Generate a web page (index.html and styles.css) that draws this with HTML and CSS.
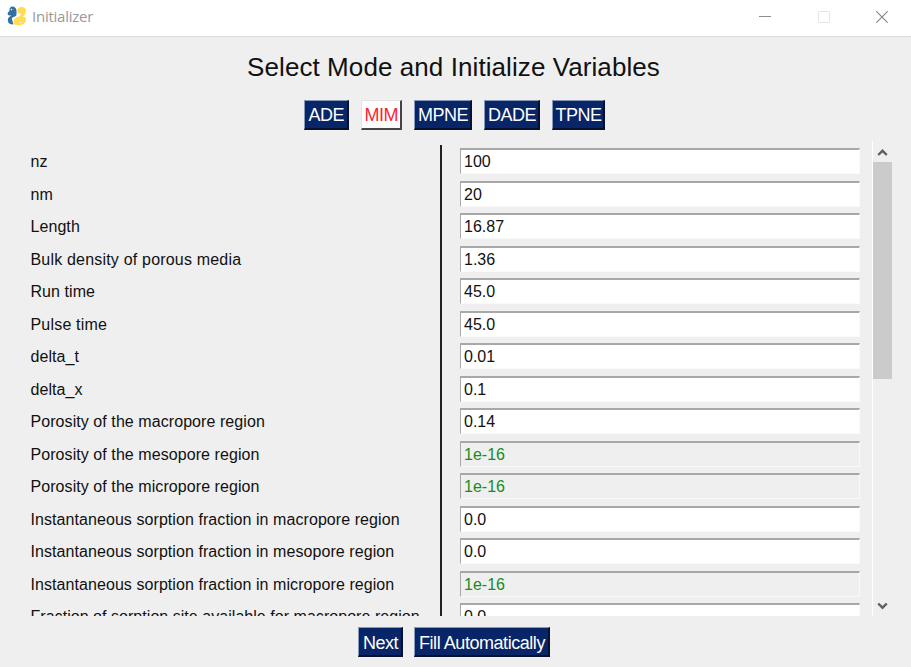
FILE: index.html
```html
<!DOCTYPE html>
<html lang="en">
<head>
<meta charset="utf-8">
<title>Initializer</title>
<link rel="stylesheet" href="styles.css">
</head>
<body>
<header class="titlebar">
  <svg class="logo" width="20" height="20" viewBox="0 0 20 20">
    <path d="M2.500 4.200Q2.500.6 5.500.6T9.500 4.200v4.300Q9.500 10 8 10.500l-2.500 1Q4.500 12 5 13.500l1.500 5Q1 18.500.8 14.500.6 12 2.500 10.700L4.500 9.500H2Q.6 9 .6 7.500T2.500 5z" fill="#3470a4"/>
    <path d="M10.500 4.500Q10.500 1 14.500.9q4.500 0 4.500 4.100 0 3-2 4.500l-1.500 1.200h2q1.500.8 1.500 2.800 0 2.800-2.500 4.500-2.500 1.500-6 1.300-4-.3-4-3.500Q6.500 12.500 9.500 11.500l3-1.300q1.800-1 1.500-2.700H10.500z" fill="#ffdc51"/>
    <circle cx="4.500" cy="3.500" r=".8" fill="#fff"/><circle cx="13.500" cy="16.500" r=".8" fill="#fff"/>
  </svg>
  <span class="app-name">Initializer</span>
  <div class="controls">
    <svg width="12" height="12" viewBox="0 0 12 12"><path d="M0 5.500h12" stroke="#8e8e8e"/></svg>
    <svg width="12" height="12" viewBox="0 0 12 12"><path d="M.5.5h11v11H.5z" fill="none" stroke="#e6e6e6"/></svg>
    <svg width="12" height="12" viewBox="0 0 12 12"><path d="M.3.3l11.400 11.400M11.700.3L.3 11.700" stroke="#858585" stroke-width="1.100"/></svg>
  </div>
</header>
<h1>Select Mode and Initialize Variables</h1>
<nav class="modes">
  <button class="w44">ADE</button>
  <button class="w42 active">MIM</button>
  <button class="w58">MPNE</button>
  <button class="w56">DADE</button>
  <button class="w53">TPNE</button>
</nav>
<main class="pane">
  <div class="labels">
    <div>nz</div><div>nm</div><div>Length</div><div class="loose">Bulk density of porous media</div><div>Run time</div><div class="loose">Pulse time</div><div>delta_t</div><div>delta_x</div><div>Porosity of the macropore region</div><div>Porosity of the mesopore region</div><div>Porosity of the micropore region</div><div>Instantaneous sorption fraction in macropore region</div><div>Instantaneous sorption fraction in mesopore region</div><div>Instantaneous sorption fraction in micropore region</div><div class="last">Fraction of sorption site available for macropore region</div>
  </div>
  <div class="divider"></div>
  <div class="fields">
    <div><span>100</span></div><div><span>20</span></div><div><span>16.87</span></div><div><span>1.36</span></div><div><span>45.0</span></div><div><span>45.0</span></div><div><span>0.01</span></div><div><span>0.1</span></div><div><span>0.14</span></div><div><span class="off">1e-16</span></div><div><span class="off">1e-16</span></div><div><span>0.0</span></div><div><span>0.0</span></div><div><span class="off">1e-16</span></div><div><span>0.0</span></div>
  </div>
  <div class="scrollbar">
    <svg width="20" height="21" viewBox="0 0 20 21"><path d="M5.200 14l4.300-4.200 4.300 4.200" fill="none" stroke="#606060" stroke-width="2.400"/></svg>
    <div class="thumb"></div>
    <svg class="down" width="20" height="21" viewBox="0 0 20 21"><path d="M5.200 8.500l4.300 4.200 4.300-4.200" fill="none" stroke="#606060" stroke-width="2.400"/></svg>
  </div>
</main>
<footer>
  <button class="w44">Next</button>
  <button class="w135">Fill Automatically</button>
</footer>
</body>
</html>
```
FILE: styles.css
```css
* { box-sizing: border-box; }
body { margin: 0; width: 911px; height: 667px; overflow: hidden; background: #efefef; color: #111; font: 16px/20px "Liberation Sans", Arial, sans-serif; }
.titlebar { display: flex; align-items: center; height: 37px; padding: 0 23px 4px 7px; background: #fff; border-bottom: 1px solid #d9d9d9; }
.logo { display: block; }
.app-name { margin-left: 5px; color: #999; font: 15px/20px "Open Sans", "Noto Sans", sans-serif; letter-spacing: -.25px; }
.controls { display: flex; gap: 46.5px; margin-left: auto; padding-top: 1px; }
.controls svg { display: block; }
h1 { margin: 14px 0 0; padding-right: 4px; height: 32px; font-size: 26px; font-weight: 400; line-height: 32px; letter-spacing: .08px; text-align: center; white-space: nowrap; }
.modes { display: flex; gap: 12px; height: 30px; margin: 17px 0 0 304px; }
button { height: 30px; margin: 0; padding: 1px 0 0 1px; border: 2px solid; border-color: #8799b8 #08112b #08112b #8799b8; border-width: 1px 2px 2px 1px; border-radius: 0; background: #082567; color: #fff; font: 18px/26px "Liberation Sans", Arial, sans-serif; letter-spacing: -.45px; white-space: nowrap; }
.active { border-color: #e3e3e3 #444 #444 #e3e3e3; background: #fff; color: #ff1f32; }
.w44 { width: 45px; }
.modes .w44 { width: 44.5px; }
.w42 { width: 41.5px; }
.w58 { width: 58px; }
.w56 { width: 56px; }
.w53 { width: 53px; }
.w135 { width: 136px; }
.pane { display: flex; height: 475px; margin-top: 11px; overflow: hidden; }
.labels { width: 409.5px; margin-left: 30.5px; padding-top: 5px; letter-spacing: .07px; }
.labels div { height: 32.5px; line-height: 32px; white-space: nowrap; }
.labels .loose { letter-spacing: .19px; }
.labels .last { letter-spacing: .04px; }
.divider { width: 2px; height: 471px; margin-top: 4px; background: #222; }
.fields { width: 400px; margin-left: 18px; padding-top: 7px; }
.fields div { height: 32.5px; }
.fields span { display: block; height: 26px; padding-left: 3px; border: 1px solid; border-width: 2px 1px 1px 1px; border-color: #a8a8a8 #fafafa #fafafa #a8a8a8; background: #fff; line-height: 23px; }
.fields .off { background: #efefef; color: #198c19; }
.scrollbar { display: flex; flex-direction: column; width: 21px; margin-left: 12px; border-left: 1px solid #fff; }
.scrollbar svg { display: block; flex: none; }
.thumb { width: 19px; height: 217px; background: #cbcbcb; }
.down { margin-top: auto; }
footer { display: flex; gap: 11px; margin: 11px 0 0 358px; }
footer button { padding-top: 2px; line-height: 27px; }
```
